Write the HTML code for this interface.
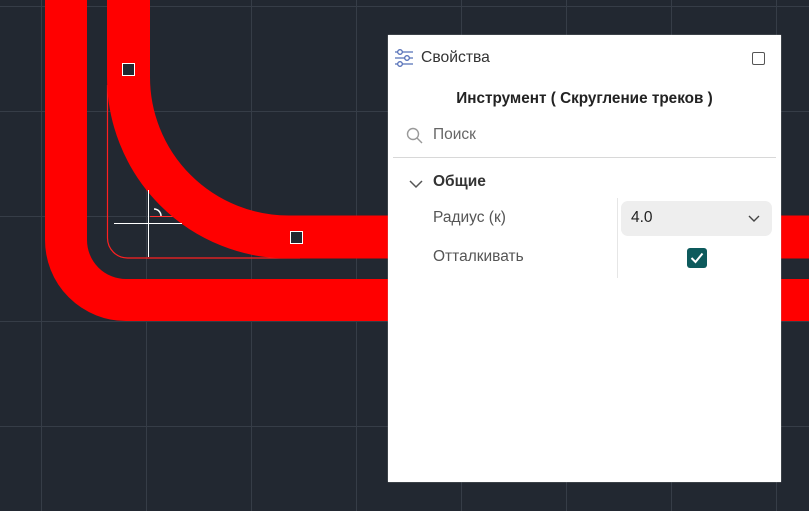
<!DOCTYPE html>
<html><head><meta charset="utf-8"><style>
html,body{margin:0;padding:0;width:809px;height:511px;overflow:hidden;background:#222831;font-family:"Liberation Sans","Noto Sans CJK SC",sans-serif}
#panel{position:absolute;left:388px;top:35px;width:393px;height:447px;background:#fff;box-shadow:0 0 1px #aaa}
.t{position:absolute;white-space:nowrap}
</style></head><body>
<svg width="809" height="511" style="position:absolute;left:0;top:0">
<g stroke="#363d47" stroke-width="1">
<line x1="41.5" y1="0" x2="41.5" y2="511"/><line x1="146.5" y1="0" x2="146.5" y2="511"/><line x1="251.5" y1="0" x2="251.5" y2="511"/><line x1="356.5" y1="0" x2="356.5" y2="511"/><line x1="461.5" y1="0" x2="461.5" y2="511"/><line x1="566.5" y1="0" x2="566.5" y2="511"/><line x1="671.5" y1="0" x2="671.5" y2="511"/><line x1="776.5" y1="0" x2="776.5" y2="511"/>
<line x1="0" y1="6.5" x2="809" y2="6.5"/><line x1="0" y1="111.5" x2="809" y2="111.5"/><line x1="0" y1="216.5" x2="809" y2="216.5"/><line x1="0" y1="321.5" x2="809" y2="321.5"/><line x1="0" y1="426.5" x2="809" y2="426.5"/>
</g>
<path d="M66 0 V240 A60 60 0 0 0 126 300 H809" fill="none" stroke="#ff0000" stroke-width="42"/>
<path d="M107.5 85 V238 A20 20 0 0 0 127.5 258 H300" fill="none" stroke="#ff2020" stroke-width="1.2"/>
<line x1="150" y1="216.5" x2="180" y2="216.5" stroke="#ff3030" stroke-width="1"/>
<path d="M128.5 0 V77 A160 160 0 0 0 288.5 237 H809" fill="none" stroke="#ff0000" stroke-width="43"/>
<g stroke="#fff" stroke-width="1">
<line x1="148.5" y1="190" x2="148.5" y2="257"/><line x1="114" y1="223.5" x2="182" y2="223.5"/>
<path d="M154 209 A7 7 0 0 1 161 216" fill="none" stroke-width="1.5"/>
<rect x="122.5" y="63.5" width="12" height="12" fill="#222831"/>
<rect x="290.5" y="231.5" width="12" height="12" fill="#222831"/>
</g>
</svg>
<div id="panel">
<svg width="20" height="20" style="position:absolute;left:6px;top:14px" fill="none" stroke="#5570b8" stroke-width="1.3">
<line x1="1" y1="3" x2="19" y2="3"/><line x1="1" y1="9" x2="19" y2="9"/><line x1="1" y1="15" x2="19" y2="15"/>
<circle cx="6" cy="3" r="2.3" fill="#fff"/><circle cx="13" cy="9" r="2.3" fill="#fff"/><circle cx="6" cy="15" r="2.3" fill="#fff"/>
</svg>
<div class="t" style="left:33px;top:14px;font-size:15.7px;color:#333">Свойства</div>
<div style="position:absolute;left:364px;top:17px;width:11px;height:11px;border:1.3px solid #555;border-radius:2px"></div>
<div class="t" style="left:0;width:393px;text-align:center;top:55px;font-size:15.3px;font-weight:bold;color:#222">Инструмент ( Скругление треков )</div>
<svg width="18" height="18" style="position:absolute;left:18px;top:92px" fill="none" stroke="#999" stroke-width="1.4"><circle cx="7" cy="7" r="5.5"/><line x1="11" y1="11" x2="16" y2="16"/></svg>
<div class="t" style="left:45px;top:91px;font-size:15.5px;color:#666">Поиск</div>
<div style="position:absolute;left:5px;top:122px;width:383px;height:1px;background:#d8d8d8"></div>
<svg width="14" height="10" style="position:absolute;left:21px;top:144px" fill="none" stroke="#555" stroke-width="1.5"><path d="M1 2 L7 8 L13 2"/></svg>
<div class="t" style="left:45px;top:138px;font-size:15.5px;font-weight:bold;color:#333">Общие</div>
<div style="position:absolute;left:229px;top:163px;width:1px;height:80px;background:#e6e6e6"></div>
<div class="t" style="left:45px;top:174px;font-size:15.5px;color:#555">Радиус (к)</div>
<div style="position:absolute;left:233px;top:166px;width:151px;height:35px;background:#eeeeee;border-radius:7px"></div>
<div class="t" style="left:243px;top:174px;font-size:15.5px;color:#222">4.0</div>
<svg width="12" height="8" style="position:absolute;left:360px;top:180px" fill="none" stroke="#444" stroke-width="1.4"><path d="M1 1 L6 6 L11 1"/></svg>
<div class="t" style="left:45px;top:213px;font-size:15.5px;color:#555">Отталкивать</div>
<div style="position:absolute;left:299px;top:213px;width:20px;height:20px;background:#0d5a5c;border-radius:3px"></div>
<svg width="20" height="20" style="position:absolute;left:299px;top:213px" fill="none" stroke="#fff" stroke-width="2"><path d="M4.5 10 L8.5 14 L15.5 5.5"/></svg>
</div>
</body></html>
